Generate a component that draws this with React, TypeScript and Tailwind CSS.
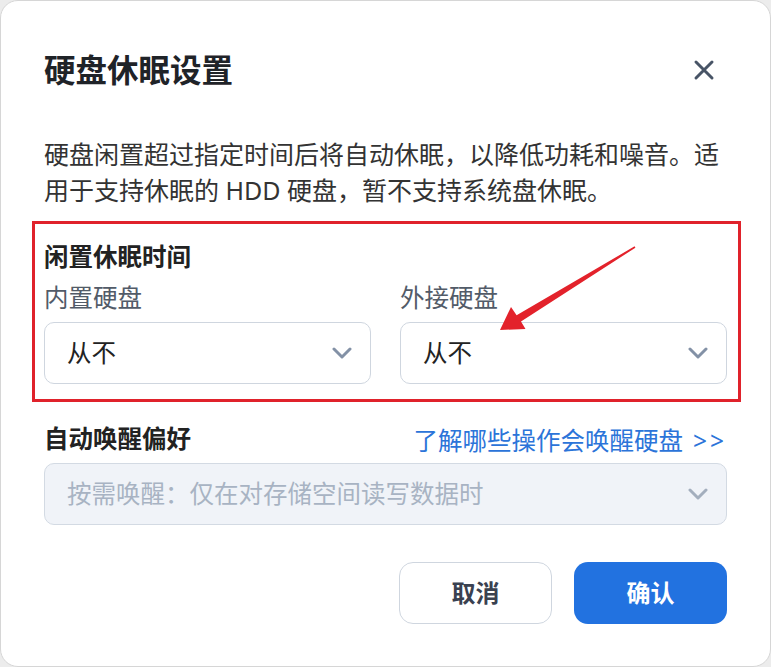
import React from "react";

const font = { fontFamily: '"Noto Sans", "Noto Sans CJK SC", sans-serif' };

function Chevron({ color = "#8a98ac" }: { color?: string }) {
  return (
    <svg width="20" height="12" viewBox="0 0 20 12" fill="none">
      <path d="M2 2 L10 10 L18 2" stroke={color} strokeWidth="3" strokeLinecap="round" strokeLinejoin="round" />
    </svg>
  );
}

function Select({ value, disabled }: { value: string; disabled?: boolean }) {
  return (
    <div
      className={
        "flex h-[62px] items-center justify-between rounded-[10px] border pl-[22px] pr-[18px] " +
        (disabled ? "border-[#d3dae3] bg-[#f0f3f8]" : "border-[#cfd6df] bg-white")
      }
    >
      <span className={"text-[24.5px] leading-[32px] " + (disabled ? "text-[#a8b3c3]" : "text-[#222222]")}>{value}</span>
      <Chevron color={disabled ? "#a3aebd" : "#8391a6"} />
    </div>
  );
}

export default function App() {
  return (
    <div className="min-h-[667px] w-[771px] bg-[#ececec]" style={font}>
      <div className="relative h-[667px] w-[771px] overflow-hidden rounded-[18px] border border-[#d6d6d6] bg-white px-[43px]">
        <div className="flex items-center justify-between pt-[49px]">
          <h1 className="text-[31.5px] font-bold leading-[40px] text-[#1f2328]">硬盘休眠设置</h1>
          <svg width="24" height="24" viewBox="0 0 24 24" className="mr-[11px]">
            <path d="M4 4 L20 20 M20 4 L4 20" stroke="#485466" strokeWidth="3" strokeLinecap="round" />
          </svg>
        </div>

        <p className="mt-[46px] text-[25px] leading-[36px] text-[#333333]">
          硬盘闲置超过指定时间后将自动休眠，以降低功耗和噪音。适用于支持休眠的 HDD 硬盘，暂不支持系统盘休眠。
        </p>

        <div className="-ml-[12px] -mr-[14px] mt-[13px] border-[3px] border-[#e0222b] pb-[15px] pl-[9px] pr-[11px] pt-[17px]">
          <div className="text-[24.5px] font-bold leading-[32px] text-[#222222]">闲置休眠时间</div>
          <div className="mt-[9px] grid grid-cols-2 gap-x-[29px]">
            <div>
              <div className="mb-[8px] text-[24.5px] leading-[32px] text-[#525b68]">内置硬盘</div>
              <Select value="从不" />
            </div>
            <div>
              <div className="mb-[8px] text-[24.5px] leading-[32px] text-[#525b68]">外接硬盘</div>
              <Select value="从不" />
            </div>
          </div>
        </div>

        <div className="mt-[19px] flex items-center justify-between">
          <div className="text-[24.5px] font-bold leading-[32px] text-[#222222]">自动唤醒偏好</div>
          <div className="mt-[4px] text-[24.5px] leading-[32px] text-[#2b74d9]">
            了解哪些操作会唤醒硬盘<span className="ml-[10px] tracking-[3px]">&gt;&gt;</span>
          </div>
        </div>
        <div className="mt-[6px]">
          <Select value="按需唤醒：仅在对存储空间读写数据时" disabled />
        </div>

        <div className="mt-[37px] flex justify-end gap-[22px]">
          <button className="h-[62px] w-[153px] rounded-[14px] border border-[#cfd6df] bg-white text-[24px] font-bold text-[#3a4150]">
            取消
          </button>
          <button className="h-[62px] w-[153px] rounded-[14px] bg-[#2272e0] text-[24px] font-bold text-white">
            确认
          </button>
        </div>

        <svg className="pointer-events-none absolute -left-px -top-px" width="771" height="667" viewBox="0 0 771 667">
          <polygon
            points="635.4,247.7 521,321.5 525.5,329 500,330 511,307 516.6,315.3 634.6,246.3"
            fill="#e3222b"
          />
        </svg>
      </div>
    </div>
  );
}
